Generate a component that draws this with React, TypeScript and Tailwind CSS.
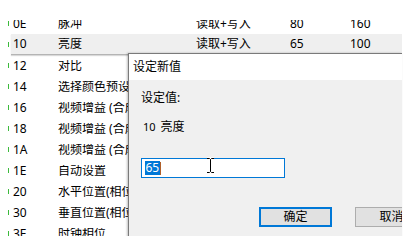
import React from "react";

const rows = [
  { id: "0E", name: "脉冲", acc: "读取+写入", cur: "80", max: "160" },
  { id: "10", name: "亮度", acc: "读取+写入", cur: "65", max: "100", sel: true },
  { id: "12", name: "对比", acc: "读取+写入", cur: "50", max: "100" },
  { id: "14", name: "选择颜色预设置", acc: "读取+写入", cur: "5", max: "11" },
  { id: "16", name: "视频增益 (合成色)", acc: "读取+写入", cur: "50", max: "100" },
  { id: "18", name: "视频增益 (合成色)", acc: "读取+写入", cur: "50", max: "100" },
  { id: "1A", name: "视频增益 (合成色)", acc: "读取+写入", cur: "50", max: "100" },
  { id: "1E", name: "自动设置", acc: "写入", cur: "0", max: "1" },
  { id: "20", name: "水平位置(相位)", acc: "读取+写入", cur: "50", max: "100" },
  { id: "30", name: "垂直位置(相位)", acc: "读取+写入", cur: "50", max: "100" },
  { id: "3E", name: "时钟相位", acc: "读取+写入", cur: "50", max: "100" },
];

export default function App() {
  return (
    <div
      className="relative w-[414px] h-[236px] overflow-hidden bg-white text-[12px] text-black"
      style={{ fontFamily: '"Noto Sans", "Noto Sans CJK SC", sans-serif' }}
    >
      <div className="pt-[20px]">
        <div className="w-[402px] h-[216px] overflow-hidden">
          <div className="mt-[-7px] flex flex-col">
            {rows.map((r) => (
              <div key={r.id} className="flex h-[21px] items-center">
                <div className="w-[11px] h-full flex items-center pl-[8px]">
                  <div className="w-[1px] h-[5px] bg-[#3cba3c]" />
                </div>
                <div
                  className={
                    "flex flex-1 h-full items-center pl-[2px] whitespace-nowrap " +
                    (r.sel ? "bg-[#efefef] border-b border-[#b4b4b4] shadow-[0_1px_1px_rgba(0,0,0,0.15)]" : "")
                  }
                >
                  <div className="w-[45px] leading-none">{r.id}</div>
                  <div className="w-[138px] overflow-hidden leading-none">{r.name}</div>
                  <div className="w-[94px] leading-none">{r.acc}</div>
                  <div className="w-[60px] leading-none">{r.cur}</div>
                  <div className="leading-none">{r.max}</div>
                </div>
              </div>
            ))}
          </div>
        </div>
      </div>

      {/* Dialog */}
      <div className="absolute left-[128px] top-[53px] w-[274px] h-[190px] overflow-hidden border-l border-t border-[#7a7a7a] bg-[#f0f0f0] shadow-[-1px_0_2px_rgba(0,0,0,0.25)]">
        <div className="h-[26px] bg-white flex items-center pl-[4px] text-[12px]">设定新值</div>
        <div className="flex flex-col">
          <div className="mt-[10px] pl-[12px] h-[16px] leading-[16px]">设定值:</div>
          <div className="mt-[13px] pl-[14px] h-[16px] leading-[16px] flex items-center gap-[5px]">
            <span className="text-[11px]">10</span>
            <span>亮度</span>
          </div>
          <div className="relative mt-[23px] ml-[12px] w-[144px] h-[20px] border border-[#0078d7] bg-white flex items-center pl-[3px]">
            <span className="bg-[#0078d7] text-white leading-[14px] h-[14px] px-[0.5px]">65</span>
            <span className="w-[1px] h-[13px] bg-[#b0602a]" />
            <svg
              className="absolute left-[64px] top-[-2px]"
              width="9"
              height="17"
              viewBox="0 0 9 17"
            >
              <path d="M1 1.5h2.5l1 1 1-1H8M4.5 2.5v12M1 15.5h2.5l1-1 1 1H8" stroke="#fff" strokeWidth="2.5" fill="none" />
              <path d="M1 1.5h2.5l1 1 1-1H8M4.5 2.5v12M1 15.5h2.5l1-1 1 1H8" stroke="#000" strokeWidth="1" fill="none" />
            </svg>
          </div>
          <div className="mt-[29px] flex pl-[130px] gap-[23px]">
            <div className="w-[73px] h-[20px] shrink-0 border-2 border-[#0078d7] bg-[#e1e1e1] flex items-center justify-center">
              确定
            </div>
            <div className="w-[73px] h-[20px] shrink-0 border border-[#adadad] bg-[#e1e1e1] flex items-center justify-center">
              取消
            </div>
          </div>
        </div>
      </div>
    </div>
  );
}
